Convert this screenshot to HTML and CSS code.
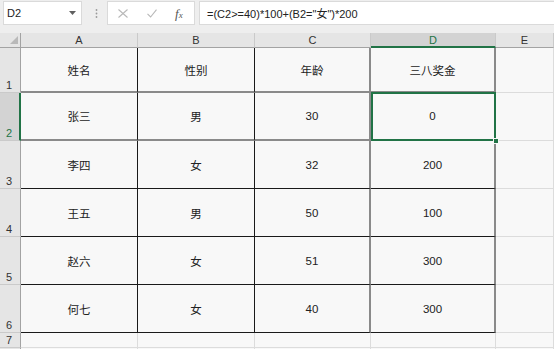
FILE: index.html
```html
<!DOCTYPE html>
<html>
<head>
<meta charset="utf-8">
<link rel="stylesheet" href="styles.css">
</head>
<body>
<div class="app">
  <div class="toolbar">
    <div class="namebox">
      <span class="ref">D2</span>
      <svg class="caret" width="7" height="4" viewBox="0 0 7 4"><path d="M0 0H7L3.5 4Z" fill="#606060"/></svg>
    </div>
    <div class="grip">
      <svg width="3" height="9" viewBox="0 0 3 9"><circle cx="1.5" cy="1" r="0.9" fill="#9a9a9a"/><circle cx="1.5" cy="4.5" r="0.9" fill="#9a9a9a"/><circle cx="1.5" cy="8" r="0.9" fill="#9a9a9a"/></svg>
    </div>
    <div class="fbtns">
      <svg width="10" height="9" viewBox="0 0 10 9"><path d="M0.5 0.5L9.5 8.5M9.5 0.5L0.5 8.5" stroke="#b8b8b8" stroke-width="1.1" fill="none"/></svg>
      <svg width="10" height="9" viewBox="0 0 10 9"><path d="M0.5 4.8L3.6 8L9.5 0.6" stroke="#b8b8b8" stroke-width="1.1" fill="none"/></svg>
      <span class="fx">f<span class="fxs">x</span></span>
    </div>
    <div class="formula">=(C2&gt;=40)*100+(B2="女")*200</div>
  </div>

  <div class="sheet">
    <div class="c corner"><svg width="8" height="8" viewBox="0 0 8 8"><path d="M8 0V8H0Z" fill="#b9b9b9"/></svg></div>
    <div class="c ch">A</div>
    <div class="c ch">B</div>
    <div class="c ch">C</div>
    <div class="c ch sel">D</div>
    <div class="c ch">E</div>

    <div class="c rh">1</div>
    <div class="c t gb">姓名</div>
    <div class="c t gb">性别</div>
    <div class="c t gb gr">年龄</div>
    <div class="c t gb gr">三八奖金</div>
    <div class="c"></div>

    <div class="c rh sel">2</div>
    <div class="c t gb">张三</div>
    <div class="c t gb">男</div>
    <div class="c t gb gr">30</div>
    <div class="c t gb gr active">0<span class="handle"></span></div>
    <div class="c"></div>

    <div class="c rh">3</div>
    <div class="c t">李四</div>
    <div class="c t">女</div>
    <div class="c t gr">32</div>
    <div class="c t gr">200</div>
    <div class="c"></div>

    <div class="c rh">4</div>
    <div class="c t">王五</div>
    <div class="c t">男</div>
    <div class="c t gr">50</div>
    <div class="c t gr">100</div>
    <div class="c"></div>

    <div class="c rh">5</div>
    <div class="c t">赵六</div>
    <div class="c t">女</div>
    <div class="c t gr">51</div>
    <div class="c t gr">300</div>
    <div class="c"></div>

    <div class="c rh">6</div>
    <div class="c t">何七</div>
    <div class="c t">女</div>
    <div class="c t gr">40</div>
    <div class="c t gr">300</div>
    <div class="c"></div>

    <div class="c rh">7</div>
    <div class="c"></div>
    <div class="c"></div>
    <div class="c"></div>
    <div class="c"></div>
    <div class="c"></div>

    <div class="c rh"></div>
    <div class="c"></div>
    <div class="c"></div>
    <div class="c"></div>
    <div class="c"></div>
    <div class="c"></div>
  </div>
</div>
</body>
</html>
```

FILE: styles.css
```css
html, body {
  margin: 0;
  padding: 0;
  background: #f8f8f8;
}

.app {
  width: 554px;
  height: 349px;
  overflow: hidden;
  font-family: "Liberation Sans", "Noto Sans CJK SC", sans-serif;
}

/* ---------- toolbar ---------- */
.toolbar {
  height: 33px;
  box-sizing: border-box;
  padding-top: 1px;
  background: #eeeeee;
  display: flex;
  align-items: flex-start;
}

.namebox {
  margin-left: 3px;
  width: 79px;
  height: 24px;
  box-sizing: border-box;
  background: #ffffff;
  border: 1px solid #dadada;
  display: flex;
  align-items: center;
  padding-left: 3px;
  padding-right: 5px;
  font-size: 11px;
  color: #222;
}

.namebox .ref {
  flex: 1;
}

.grip {
  width: 25px;
  height: 24px;
  display: flex;
  align-items: center;
  justify-content: center;
  padding-left: 3px;
  box-sizing: border-box;
}

.fbtns {
  width: 88px;
  height: 24px;
  box-sizing: border-box;
  background: #ffffff;
  border: 1px solid #dadada;
  display: flex;
  align-items: center;
  padding-left: 10px;
  gap: 19px;
}

.fx {
  font-family: "Liberation Serif", serif;
  font-style: italic;
  font-size: 13px;
  color: #555;
  line-height: 1;
  margin-left: -1px;
}

.fxs {
  font-size: 9px;
}

.formula {
  flex: 1;
  margin-left: 4px;
  height: 24px;
  box-sizing: border-box;
  background: #ffffff;
  border: 1px solid #dadada;
  border-right: none;
  padding-left: 7px;
  display: flex;
  align-items: center;
  font-size: 11px;
  color: #222;
  white-space: nowrap;
}

/* ---------- sheet ---------- */
.sheet {
  display: grid;
  grid-template-columns: 21px 117px 117px 116px 125px 1fr;
  grid-template-rows: 15px 45px 48px 48px 48px 48px 48px 15px 20px;
  background: #f8f8f8;
}

.c {
  box-sizing: border-box;
  border-right: 1px solid #dcdcdc;
  border-bottom: 1px solid #dcdcdc;
  display: flex;
  align-items: center;
  justify-content: center;
  overflow: visible;
}

.corner {
  background: #e5e5e5;
  border-right: 1px solid #a3a3a3;
  border-bottom: 1px solid #a3a3a3;
  justify-content: flex-end;
  align-items: flex-end;
  padding: 0 2px 3px 0;
}

.ch {
  background: #e5e5e5;
  border-right: 1px solid #cacaca;
  border-bottom: 1px solid #a3a3a3;
  align-items: flex-end;
  font-size: 11px;
  line-height: 12px;
  padding-bottom: 1px;
  color: #333;
}

.ch.sel {
  background: #d3d3d3;
  border-bottom: 2px solid #217346;
  padding-bottom: 0;
  color: #217346;
}

.rh {
  background: #e5e5e5;
  border-right: 1px solid #a3a3a3;
  border-bottom: 1px solid #cacaca;
  justify-content: flex-start;
  align-items: flex-end;
  padding-left: 6px;
  padding-bottom: 1px;
  font-size: 11px;
  line-height: 12px;
  color: #333;
}

.rh.sel {
  background: #d3d3d3;
  border-right: 2px solid #217346;
  color: #217346;
}

.t {
  border-right: 1px solid #1a1a1a;
  border-bottom: 1px solid #1a1a1a;
  font-size: 11.5px;
  color: #222;
}

.t.gb {
  border-bottom: 2px solid #8a8a8a;
}

.t.gr {
  border-right: 2px solid #8a8a8a;
}

.active {
  position: relative;
}

.active::after {
  content: "";
  position: absolute;
  top: -1px;
  left: 0;
  right: -2px;
  bottom: -2px;
  border: 2px solid #217346;
}

.handle {
  position: absolute;
  right: -5px;
  bottom: -5px;
  width: 6px;
  height: 6px;
  box-sizing: border-box;
  background: #217346;
  border: 1px solid #f8f8f8;
  z-index: 2;
}
```
